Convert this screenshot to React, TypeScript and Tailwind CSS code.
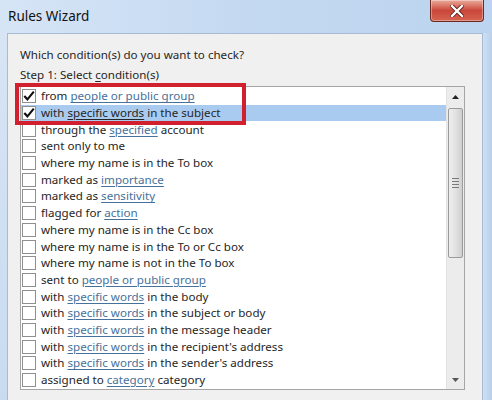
import React from "react";

type Part = { t: string; link?: boolean };
type Row = { parts: Part[]; checked?: boolean; selected?: boolean };

const sw = (rest: string): Part[] => [{ t: "with " }, { t: "specific words", link: true }, { t: rest }];

const rows: Row[] = [
  { checked: true, parts: [{ t: "from " }, { t: "people or public group", link: true }] },
  { checked: true, selected: true, parts: sw(" in the subject") },
  { parts: [{ t: "through the " }, { t: "specified", link: true }, { t: " account" }] },
  { parts: [{ t: "sent only to me" }] },
  { parts: [{ t: "where my name is in the To box" }] },
  { parts: [{ t: "marked as " }, { t: "importance", link: true }] },
  { parts: [{ t: "marked as " }, { t: "sensitivity", link: true }] },
  { parts: [{ t: "flagged for " }, { t: "action", link: true }] },
  { parts: [{ t: "where my name is in the Cc box" }] },
  { parts: [{ t: "where my name is in the To or Cc box" }] },
  { parts: [{ t: "where my name is not in the To box" }] },
  { parts: [{ t: "sent to " }, { t: "people or public group", link: true }] },
  { parts: sw(" in the body") },
  { parts: sw(" in the subject or body") },
  { parts: sw(" in the message header") },
  { parts: sw(" in the recipient's address") },
  { parts: sw(" in the sender's address") },
  { parts: [{ t: "assigned to " }, { t: "category", link: true }, { t: " category" }] },
];

function Check({ checked }: { checked?: boolean }) {
  return (
    <div className="w-[14px] h-[14px] shrink-0 border border-[#8f8f8f] bg-white flex items-center justify-center">
      {checked && (
        <svg width="12" height="12" viewBox="0 0 12 12">
          <path d="M1.3 6 L4.4 9.3 L10.8 1.6" fill="none" stroke="#0d0d0d" strokeWidth="2.1" />
        </svg>
      )}
    </div>
  );
}

export default function App() {
  return (
    <div className="w-[492px] h-[400px] overflow-hidden flex flex-col bg-[#c4d9f0] relative font-['Noto_Sans',sans-serif]">
      {/* title bar */}
      <div className="h-[33px] shrink-0 flex items-start justify-between bg-gradient-to-r from-[#d6e5f6] via-[#c4d9f1] to-[#bcd4ef]">
        <div className="pl-[8px] pt-[7px] text-[13.5px] leading-[18px] text-[#111]">Rules Wizard</div>
        <div className="mr-[8px] w-[54px] h-[22px] rounded-b-[4px] border border-t-0 border-[#6b2a22] bg-gradient-to-b from-[#e9aa9c] via-[#c9463a] to-[#d5644f] flex items-center justify-center shadow-[inset_0_0_0_1px_rgba(255,255,255,0.35)]">
          <svg width="14" height="12" viewBox="0 0 14 12">
            <path d="M2 1 L12 11 M12 1 L2 11" stroke="#5a1a14" strokeWidth="4" strokeLinecap="square" />
            <path d="M2 1 L12 11 M12 1 L2 11" stroke="#ffffff" strokeWidth="2.4" strokeLinecap="square" />
          </svg>
        </div>
      </div>
      {/* body */}
      <div className="flex flex-1 min-h-0">
        <div className="w-[7px] shrink-0 bg-gradient-to-b from-[#d7e5f5] to-[#c8dbf0]" />
        <div className="flex-1 bg-[#f0f0f0] border-l border-t border-r border-[#a7bbd3] pl-[12px] text-[11.6px] text-[#262626]">
          <div className="pt-[13px] leading-[16px]">Which condition(s) do you want to check?</div>
          <div className="mt-[4px] leading-[16px]">
            Step 1: Select <span className="underline underline-offset-2">c</span>ondition(s)
          </div>
          <div className="mt-[3px] w-[445px] h-[304px] border border-[#a5a5a5] bg-white flex">
            <div className="flex-1 pt-[1px] flex flex-col">
              {rows.map((r, i) => (
                <div
                  key={i}
                  className={
                    "h-[16.7px] flex items-center gap-[5px] pl-[1px] whitespace-nowrap " +
                    (r.selected ? "bg-[#a9cbef]" : "")
                  }
                >
                  <Check checked={r.checked} />
                  <span className="leading-[16px]">
                    {r.parts.map((p, j) =>
                      p.link ? (
                        <span
                          key={j}
                          className={
                            "underline underline-offset-2 " + (r.selected ? "text-[#262626]" : "text-[#46719a]")
                          }
                        >
                          {p.t}
                        </span>
                      ) : (
                        <span key={j} className="whitespace-pre">{p.t}</span>
                      )
                    )}
                  </span>
                </div>
              ))}
            </div>
            {/* scrollbar */}
            <div className="w-[18px] shrink-0 bg-[#ececec] border-l border-[#e2e2e2] flex flex-col">
              <div className="h-[19px] flex items-center justify-center">
                <svg width="7" height="4" viewBox="0 0 7 4">
                  <path d="M0 4 L3.5 0 L7 4 Z" fill="#222" />
                </svg>
              </div>
              <div className="mt-[2px] mx-[1px] h-[150px] rounded-[2px] border border-[#9b9b9b] bg-gradient-to-r from-[#eeeeee] via-[#e2e2e2] to-[#cfcfcf] flex items-center justify-center">
                <div className="flex flex-col gap-[2px]">
                  <div className="w-[7px] h-[1px] bg-[#7a7a7a]" />
                  <div className="w-[7px] h-[1px] bg-[#7a7a7a]" />
                  <div className="w-[7px] h-[1px] bg-[#7a7a7a]" />
                  <div className="w-[7px] h-[1px] bg-[#7a7a7a]" />
                </div>
              </div>
              <div className="flex-1" />
              <div className="h-[19px] flex items-center justify-center">
                <svg width="7" height="4" viewBox="0 0 7 4">
                  <path d="M0 0 L3.5 4 L7 0 Z" fill="#555" />
                </svg>
              </div>
            </div>
          </div>
        </div>
        <div className="w-[9px] shrink-0 bg-gradient-to-r from-[#cfe0f3] to-[#b7d0ec]" />
      </div>
      {/* red annotation box */}
      <div className="absolute left-[15px] top-[83px] w-[231px] h-[42px] border-[4px] border-[#d1212e]" />
    </div>
  );
}
